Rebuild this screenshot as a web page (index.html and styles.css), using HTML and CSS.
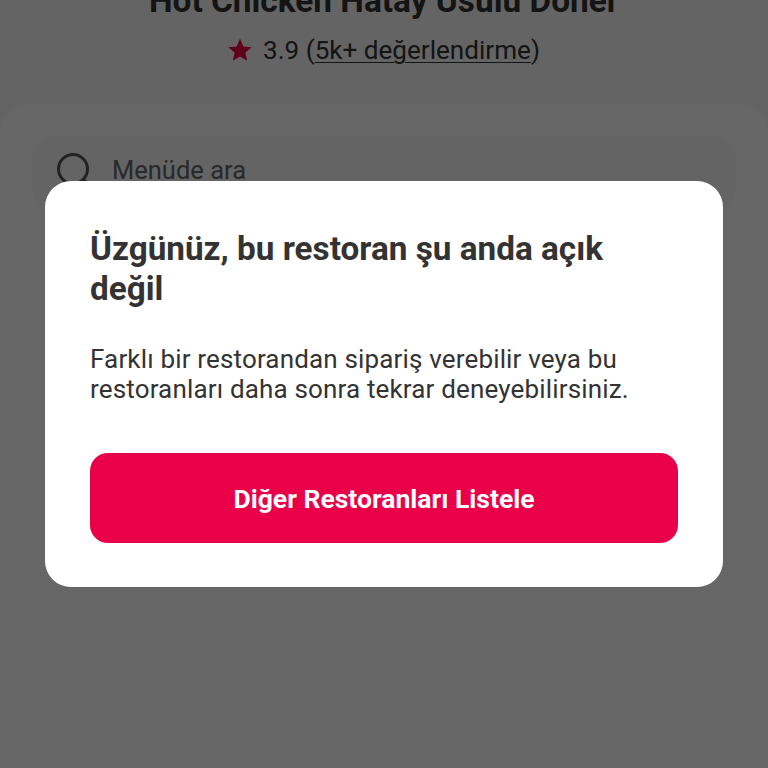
FILE: index.html
```html
<!DOCTYPE html>
<html lang="tr">
<head>
<meta charset="utf-8">
<title>Restoran</title>
<link rel="stylesheet" href="styles.css">
</head>
<body>
<main class="page">
  <h1 class="name">Hot Chicken Hatay Usulü Döner</h1>
  <p class="rating">
    <svg class="star" viewBox="0 0 24 24" aria-hidden="true"><path d="M12 .8l3.4 7.6 8.2.8-6.2 5.5 1.8 8.1L12 18.6l-7.2 4.2 1.8-8.1L.4 9.2l8.2-.8z"/></svg>
    <span>3.9 (<u>5k+ değerlendirme</u>)</span>
  </p>
  <section class="sheet">
    <div class="search">
      <svg class="search-icon" viewBox="0 0 36 36" aria-hidden="true"><circle cx="17" cy="17" r="14.5"/><path d="M27 27l7 7"/></svg>
      <span>Menüde ara</span>
    </div>
  </section>
</main>
<div class="overlay">
  <div class="dialog">
    <h2 class="title">Üzgünüz, bu restoran şu anda açık değil</h2>
    <p class="body">Farklı bir restorandan sipariş verebilir veya bu restoranları daha sonra tekrar deneyebilirsiniz.</p>
    <button class="action" type="button">Diğer Restoranları Listele</button>
  </div>
</div>
</body>
</html>
```
FILE: styles.css
```css
* { box-sizing: border-box; }
html, body { margin: 0; height: 100%; overflow: hidden; }
body { font-family: Roboto, "Noto Sans", sans-serif; background: #fff; color: #333; }
.page { height: 768px; overflow: hidden; display: flex; flex-direction: column; align-items: center; background: #fafafa; }
.name { margin: -18px 0 0; font-size: 33.4px; line-height: 38px; font-weight: 700; color: #333; text-align: center; white-space: nowrap; }
.rating { margin: 12px 0 0; display: flex; align-items: center; gap: 11px; font-size: 26.1px; line-height: 36px; color: #333; }
.star { width: 24px; height: 24px; fill: #ec0048; }
.rating u { text-underline-offset: 3px; text-decoration-thickness: 1px; }
.sheet { width: 100%; flex: 1; margin-top: 35px; padding: 32px 32px 0; background: #fff; border-radius: 32px 32px 0 0; }
.search { height: 76px; padding: 0 24px; display: flex; align-items: center; gap: 20px; background: #f9f9f9; border-radius: 24px; font-size: 25.5px; color: #666; }
.search-icon { width: 36px; height: 36px; flex: none; fill: none; stroke: #555; stroke-width: 3; margin-top: -6px; }
.search span { margin-top: -6px; }
.overlay { position: fixed; inset: 0; background: rgba(0, 0, 0, .6); padding: 181px 45px 0; }
.dialog { background: #fff; border-radius: 26px; padding: 48px 45px 45px; height: 406px; }
.title { margin: 0; font-size: 33.3px; line-height: 40px; font-weight: 700; color: #333; }
.body { margin: 35px 0 0; font-size: 26px; line-height: 30px; letter-spacing: .16px; color: #333; }
.action { display: block; width: 100%; height: 90px; margin-top: 49px; border: 0; border-radius: 18px; background: #ea0048; color: #fff; font: 700 26.5px Roboto, sans-serif; }
```
